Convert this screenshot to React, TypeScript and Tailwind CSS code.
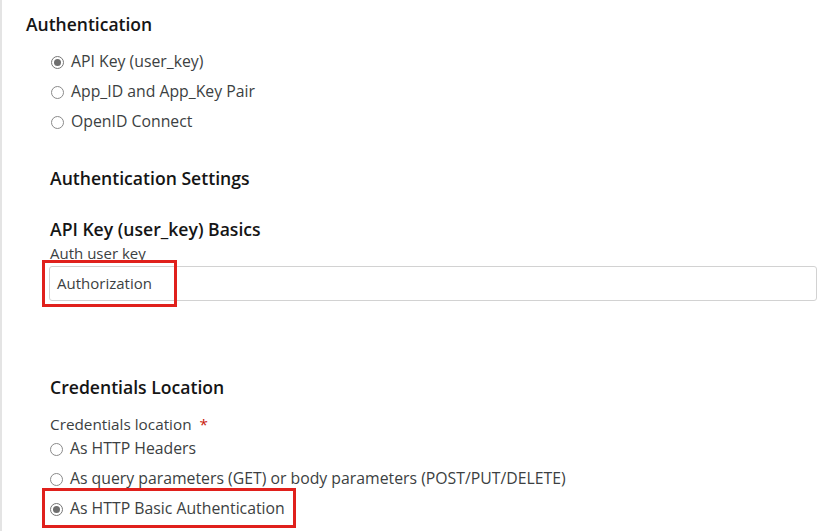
import React from "react";

interface RadioProps {
    readonly label: string;
    readonly checked?: boolean;
}

function Radio(props: RadioProps) {
    return (
        <label className="flex items-center h-[30px] text-[15.8px] text-[#3c3f42]">
            <span className={"relative w-[13px] h-[13px] rounded-full border bg-white mr-[7px] shrink-0 " + (props.checked ? "border-[#767676]" : "border-[#8a8a8a]")}>
                {props.checked ? <span className="absolute left-[2px] top-[2px] w-[7px] h-[7px] rounded-full bg-[#6e6e6e]"></span> : null}
            </span>
            <span>{props.label}</span>
        </label>
    );
}

export default function App() {
    return (
        <div className="w-[836px] h-[531px] overflow-hidden bg-white border-l-2 border-[#e4e4e4]" style={{ fontFamily: '"Open Sans", "Liberation Sans", sans-serif' }}>
            <div className="pl-[24px] pt-[12px]">
                <h2 className="text-[17.5px] leading-[24px] font-semibold text-[#151515]">Authentication</h2>
                <div className="pl-[25px] mt-[11px]">
                    <Radio label="API Key (user_key)" checked />
                    <Radio label="App_ID and App_Key Pair" />
                    <Radio label="OpenID Connect" />
                </div>

                <div className="pl-[24px]">
                    <h3 className="mt-[29px] text-[17.6px] leading-[24px] font-semibold text-[#151515]">Authentication Settings</h3>

                    <h3 className="mt-[27px] text-[17.6px] leading-[24px] font-semibold text-[#151515]">API Key (user_key) Basics</h3>
                    <div className="mt-[2px] text-[15px] leading-[20px] text-[#3c3f42]">Auth user key</div>
                    <div className="relative mt-[3px] mr-[19px] -ml-px">
                        <div className="h-[35px] border border-[#d2d2d2] rounded-[3px] flex items-center px-[7px] text-[15px] text-[#3c3f42]">
                            Authorization
                        </div>
                        <div className="absolute -left-[7px] -top-[6px] w-[135px] h-[47px] border-[3px] border-[#e0201c]"></div>
                    </div>

                    <h3 className="mt-[74px] text-[17.6px] leading-[24px] font-semibold text-[#151515]">Credentials Location</h3>
                    <div className="mt-[15px] text-[15.3px] leading-[20px] text-[#3c3f42]">
                        Credentials location <span className="ml-[4px] text-[#c9190b]">*</span>
                    </div>
                    <div className="relative">
                        <Radio label="As HTTP Headers" />
                        <Radio label="As query parameters (GET) or body parameters (POST/PUT/DELETE)" />
                        <Radio label="As HTTP Basic Authentication" checked />
                        <div className="absolute -left-[8px] top-[54px] w-[254px] h-[40px] border-[3px] border-[#e0201c]"></div>
                    </div>
                </div>
            </div>
        </div>
    );
}
